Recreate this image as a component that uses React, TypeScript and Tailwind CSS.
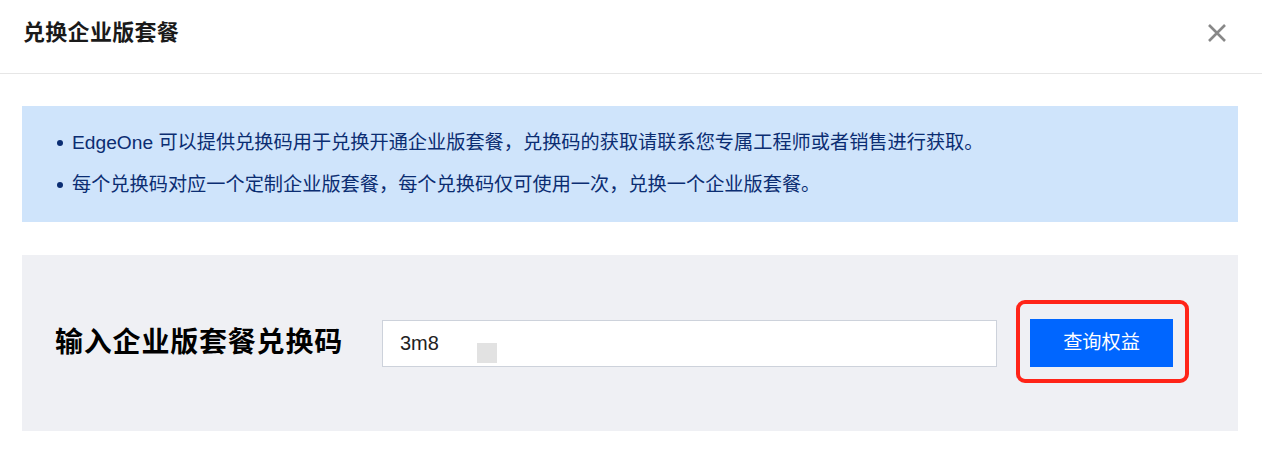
import React from "react";

const font = {
  fontFamily:
    '"Liberation Sans", "Noto Sans CJK SC", sans-serif',
};

export default function App() {
  return (
    <div className="w-[1262px] h-[456px] bg-white overflow-hidden" style={font}>
      {/* Header */}
      <div className="h-[74px] border-b border-[#e6e6e6] flex items-start justify-between pl-[23px] pr-[35px] pt-[21px]">
        <div className="text-[22px] leading-[24px] font-bold text-[#1a1a1a] tracking-[0.3px]">兑换企业版套餐</div>
        <svg width="20" height="20" viewBox="0 0 20 20" className="mt-[2px]">
          <path d="M2 2 L18 18 M18 2 L2 18" stroke="#888" strokeWidth="2.6" strokeLinecap="butt" />
        </svg>
      </div>

      {/* Content */}
      <div className="pl-[22px] pr-[24px] pt-[32px]">
        <div className="bg-[#cfe4fb] h-[116px] pt-[26px] pl-[35px] text-[19.2px] leading-[22px] text-[#0b2d72]">
          <div className="flex items-center">
            <span className="w-[6px] h-[6px] rounded-full bg-[#0b2d72] mr-[9px]" />
            <span>EdgeOne 可以提供兑换码用于兑换开通企业版套餐，兑换码的获取请联系您专属工程师或者销售进行获取。</span>
          </div>
          <div className="flex items-center mt-[20px]">
            <span className="w-[6px] h-[6px] rounded-full bg-[#0b2d72] mr-[9px]" />
            <span>每个兑换码对应一个定制企业版套餐，每个兑换码仅可使用一次，兑换一个企业版套餐。</span>
          </div>
        </div>

        <div className="mt-[33px] bg-[#eff0f4] h-[176px] flex items-center pl-[33px]">
          <div className="text-[28px] leading-[32px] font-bold text-black w-[327px] tracking-[0.8px]">
            输入企业版套餐兑换码
          </div>
          <div className="relative w-[615px] h-[47px] bg-white border border-[#cdd2db] flex items-center pl-[17px] text-[20px] text-[#222]">
            <span>3m8</span>
            <div className="absolute left-[67px] top-[0px] w-[92px] h-[45px] bg-white rounded-[10px]" />
            <div className="absolute left-[94px] top-[22px] w-[20px] h-[20px] bg-[#e2e2e2]" />
          </div>
          <div className="relative ml-[33px]">
            <div className="absolute left-[-14px] top-[-19px] right-[-16px] bottom-[-16px] border-[4px] border-[#ff2418] rounded-[9px]" />
            <button className="relative w-[143px] h-[48px] bg-[#0066ff] text-white text-[19.2px] leading-[22px]">
              查询权益
            </button>
          </div>
        </div>
      </div>
    </div>
  );
}
